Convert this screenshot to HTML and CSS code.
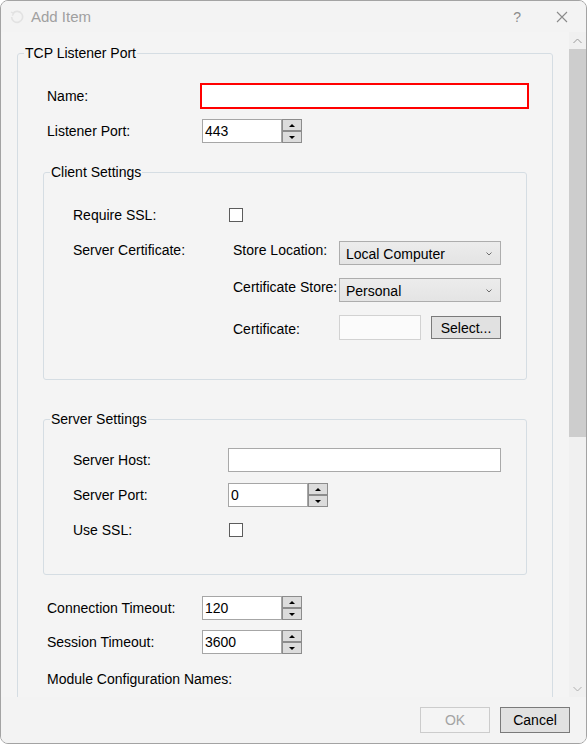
FILE: index.html
```html
<!DOCTYPE html>
<html lang="en">
<head>
<meta charset="utf-8">
<title>Add Item</title>
<link rel="stylesheet" href="styles.css">
</head>
<body>
<div class="window">
  <div class="titlebar">
    <svg class="app-icon" width="14" height="14" viewBox="0 0 14 14"><path d="M3 3.2 A5.5 5.5 0 1 1 1.6 7" fill="none" stroke="#e2e2e2" stroke-width="1.6"/><path d="M1 2 L3.6 3.4 L2.4 5.8" fill="none" stroke="#e2e2e2" stroke-width="1.4"/></svg>
    <span class="title">Add Item</span>
    <span class="help">?</span>
    <svg class="close" width="12" height="12" viewBox="0 0 12 12"><path d="M1 1 L11 11 M11 1 L1 11" stroke="#8a8a8a" stroke-width="1.1" fill="none"/></svg>
  </div>
  <div class="main">
    <div class="content">
      <fieldset class="group group-tcp">
        <legend>TCP Listener Port</legend>
        <div class="row row-name">
          <span class="lbl">Name:</span>
          <div class="textbox textbox-name invalid"></div>
        </div>
        <div class="row row-port">
          <span class="lbl">Listener Port:</span>
          <div class="spinner">
            <div class="spin-text">443</div>
            <div class="spin-btns"><div class="spin-btn"><i class="tri-up"></i></div><div class="spin-btn"><i class="tri-down"></i></div></div>
          </div>
        </div>

        <fieldset class="group group-inner group-client">
          <legend>Client Settings</legend>
          <div class="row row-first">
            <span class="lbl">Require SSL:</span>
            <span class="checkbox"></span>
          </div>
          <div class="cert-row">
            <span class="lbl lbl-top">Server Certificate:</span>
            <div class="cert-grid">
              <span class="sub-lbl">Store Location:</span>
              <div class="combo"><span>Local Computer</span><svg class="chev" width="6" height="4" viewBox="0 0 6 4"><path d="M0.5 0.5 L3 3 L5.5 0.5" fill="none" stroke="#606060" stroke-width="0.9"/></svg></div>
              <span class="sub-lbl">Certificate Store:</span>
              <div class="combo"><span>Personal</span><svg class="chev" width="6" height="4" viewBox="0 0 6 4"><path d="M0.5 0.5 L3 3 L5.5 0.5" fill="none" stroke="#606060" stroke-width="0.9"/></svg></div>
              <span class="sub-lbl sub-lbl-mid">Certificate:</span>
              <div class="cert-pick">
                <div class="textbox textbox-cert"></div>
                <div class="button button-select">Select...</div>
              </div>
            </div>
          </div>
        </fieldset>

        <fieldset class="group group-inner group-server">
          <legend>Server Settings</legend>
          <div class="row row-host">
            <span class="lbl">Server Host:</span>
            <div class="textbox textbox-host"></div>
          </div>
          <div class="row row-next">
            <span class="lbl">Server Port:</span>
            <div class="spinner">
              <div class="spin-text">0</div>
              <div class="spin-btns"><div class="spin-btn"><i class="tri-up"></i></div><div class="spin-btn"><i class="tri-down"></i></div></div>
            </div>
          </div>
          <div class="row row-ssl">
            <span class="lbl">Use SSL:</span>
            <span class="checkbox"></span>
          </div>
        </fieldset>

        <div class="row row-conn">
          <span class="lbl">Connection Timeout:</span>
          <div class="spinner">
            <div class="spin-text">120</div>
            <div class="spin-btns"><div class="spin-btn"><i class="tri-up"></i></div><div class="spin-btn"><i class="tri-down"></i></div></div>
          </div>
        </div>
        <div class="row row-session">
          <span class="lbl">Session Timeout:</span>
          <div class="spinner">
            <div class="spin-text">3600</div>
            <div class="spin-btns"><div class="spin-btn"><i class="tri-up"></i></div><div class="spin-btn"><i class="tri-down"></i></div></div>
          </div>
        </div>
        <div class="row row-module">
          <span class="lbl-wide">Module Configuration Names:</span>
        </div>
      </fieldset>
    </div>
    <div class="scrollbar">
      <div class="sb-arrow"><svg width="9" height="6" viewBox="0 0 9 6"><path d="M0.5 5 L4.5 1 L8.5 5" fill="none" stroke="#9a9a9a" stroke-width="1"/></svg></div>
      <div class="sb-thumb"></div>
      <div class="sb-track"></div>
      <div class="sb-arrow"><svg width="9" height="6" viewBox="0 0 9 6"><path d="M0.5 1 L4.5 5 L8.5 1" fill="none" stroke="#b0b0b0" stroke-width="1"/></svg></div>
    </div>
  </div>
  <div class="footer">
    <div class="button button-ok">OK</div>
    <div class="button button-cancel">Cancel</div>
  </div>
</div>
</body>
</html>
```
FILE: styles.css
```css
html, body {
  margin: 0;
  padding: 0;
  background: #ffffff;
}

body {
  font-family: "Liberation Sans", Arial, sans-serif;
  font-size: 14px;
  color: #000;
}

.window {
  width: 587px;
  height: 744px;
  box-sizing: border-box;
  border: 1px solid #a3a3a3;
  border-radius: 8px;
  background: #f3f3f3;
  overflow: hidden;
  display: flex;
  flex-direction: column;
}

/* title bar */
.titlebar {
  height: 31px;
  flex: none;
  display: flex;
  align-items: center;
  background: #f3f3f3;
}

.app-icon {
  margin-left: 9px;
  flex: none;
}

.title {
  margin-left: 7px;
  font-size: 15px;
  color: #a0a0a0;
  flex: 1;
}

.help {
  font-size: 14px;
  color: #8c8c8c;
  margin-right: 35px;
}

.close {
  margin-right: 18px;
}

/* main area */
.main {
  height: 665px;
  flex: none;
  display: flex;
}

.content {
  flex: 1;
  overflow: hidden;
  background: #f4f4f4;
}

.scrollbar {
  width: 17px;
  flex: none;
  display: flex;
  flex-direction: column;
  background: #f0f0f0;
}

.sb-arrow {
  height: 17px;
  display: flex;
  align-items: center;
  justify-content: center;
}

.sb-thumb {
  height: 388px;
  background: #cdcdcd;
}

.sb-track {
  flex: 1;
}

/* group boxes */
.group {
  margin: 0;
  padding: 0;
  min-width: 0;
  border: 1px solid #d5dde3;
  border-radius: 3px;
  box-sizing: border-box;
}

.group legend {
  padding: 0 1px;
  margin-left: 6px;
  line-height: 18px;
}

.group-tcp {
  margin: 12px 16px 0 16px;
  padding-bottom: 120px;
}

.group-inner {
  width: 484px;
  margin-left: 25px;
}

.group-client {
  margin-top: 20px;
  padding-bottom: 40px;
}

.group-server {
  margin-top: 30px;
  padding-bottom: 32px;
}

/* rows */
.row {
  display: flex;
  align-items: center;
  height: 24px;
  margin-left: 29px;
}

.row-name { margin-top: 22px; }
.row-port { margin-top: 11px; }
.row-first { margin-top: 22px; }
.row-host { margin-top: 20px; }
.row-next { margin-top: 11px; }
.row-ssl { margin-top: 11px; }
.row-conn { margin-top: 21px; }
.row-session { margin-top: 10px; }
.row-module { margin-top: 13px; }

.lbl {
  width: 155px;
  flex: none;
  line-height: 18px;
}

.lbl-wide {
  line-height: 18px;
}

.lbl-top {
  align-self: flex-start;
}

/* certificate block */
.cert-row {
  display: flex;
  margin-left: 29px;
  margin-top: 14px;
}

.cert-grid {
  display: grid;
  grid-template-columns: 111px 162px;
  grid-auto-rows: 24px;
  row-gap: 13px;
}

.sub-lbl {
  padding-left: 5px;
  line-height: 18px;
}

.sub-lbl-mid {
  padding-top: 5px;
}

.combo {
  box-sizing: border-box;
  border: 1px solid #adadad;
  background: linear-gradient(#ececec, #e4e4e4);
  display: flex;
  align-items: center;
  padding: 2px 8px 0 6px;
  justify-content: space-between;
}

.chev {
  flex: none;
}

.cert-pick {
  display: flex;
  align-items: center;
  margin-top: 1px;
}

/* inputs */
.textbox {
  box-sizing: border-box;
  height: 24px;
  border: 1px solid #a9a9a9;
  background: #fff;
}

.textbox-name {
  width: 327px;
  margin-left: -1px;
}

.invalid {
  border-color: #ff0000;
  box-shadow: 0 0 0 1px #ff0000;
}

.textbox-host {
  width: 273px;
}

.textbox-cert {
  width: 82px;
  height: 25px;
  border-color: #d2d2d2;
  background: #fbfbfb;
}

.checkbox {
  width: 14px;
  height: 14px;
  box-sizing: border-box;
  border: 1px solid #5c5c5c;
  background: #fff;
  margin-left: 1px;
}

.spinner {
  display: flex;
  height: 24px;
}

.spin-text {
  width: 80px;
  box-sizing: border-box;
  border: 1px solid #a6a6a6;
  background: #fff;
  padding-left: 2px;
  line-height: 22px;
}

.spin-btns {
  width: 20px;
  display: flex;
  flex-direction: column;
}

.spin-btn {
  flex: 1;
  box-sizing: border-box;
  border: 1px solid #8c8c8c;
  background: #dcdcdc;
  display: flex;
  align-items: center;
  justify-content: center;
}

.tri-up {
  width: 0;
  height: 0;
  border-left: 3px solid transparent;
  border-right: 3px solid transparent;
  border-bottom: 3px solid #000;
}

.tri-down {
  width: 0;
  height: 0;
  border-left: 3px solid transparent;
  border-right: 3px solid transparent;
  border-top: 3px solid #000;
}

/* buttons */
.button {
  box-sizing: border-box;
  display: flex;
  align-items: center;
  justify-content: center;
  width: 70px;
  height: 26px;
  border: 1px solid #7a7a7a;
  background: #e1e1e1;
}

.button-select {
  height: 23px;
  margin-left: 10px;
}

.footer {
  flex: 1;
  display: flex;
  justify-content: flex-end;
  gap: 10px;
  padding: 10px 16px 0 0;
  background: #f3f3f3;
}

.button-ok {
  border-color: #cccccc;
  background: #f4f4f4;
  color: #a3a3a3;
}
```
